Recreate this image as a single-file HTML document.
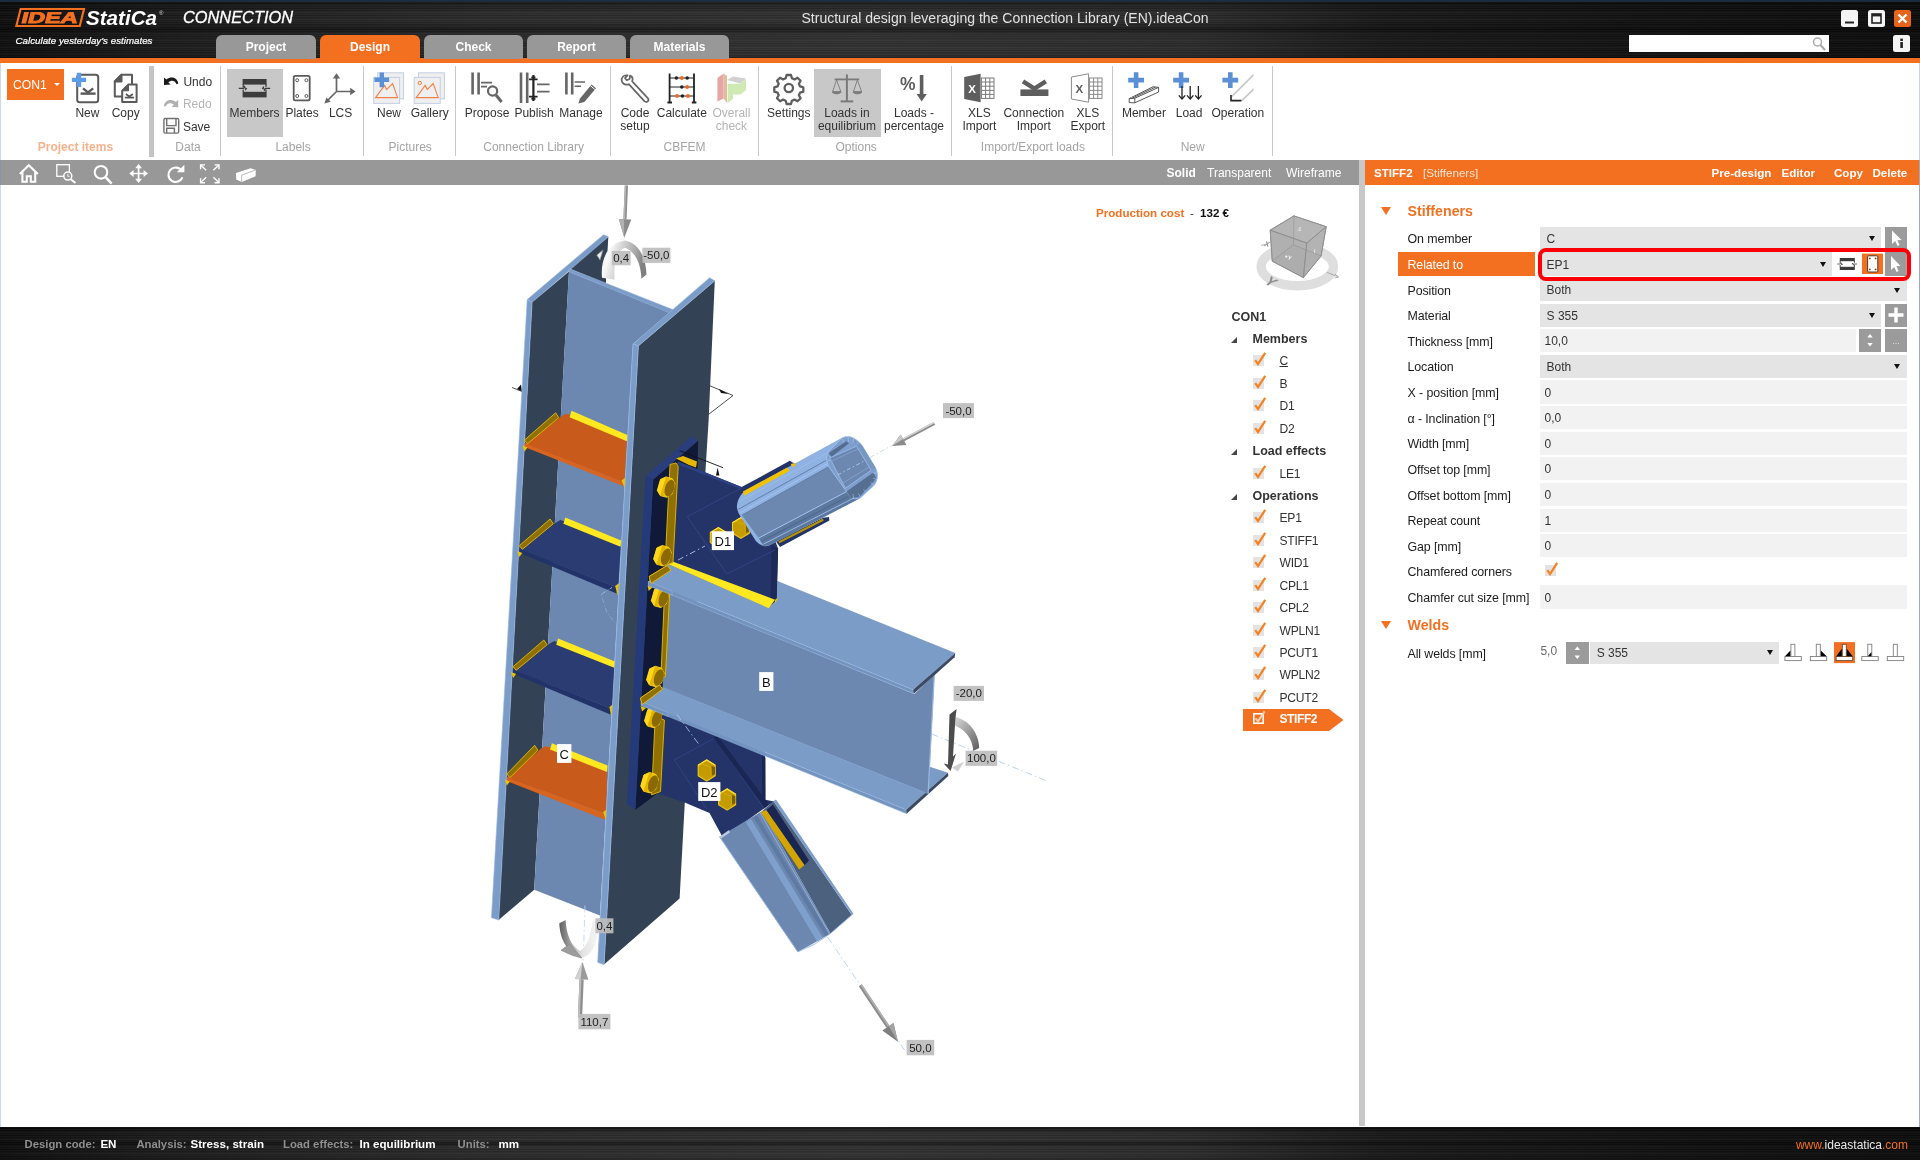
<!DOCTYPE html>
<html lang="en"><head><meta charset="utf-8"><title>IDEA StatiCa Connection</title>
<style>
*{box-sizing:border-box;margin:0;padding:0}
html,body{width:1920px;height:1160px;overflow:hidden;background:#fff}
body{font-family:"Liberation Sans",sans-serif;font-size:12px;color:#222}
#app{position:relative;width:1920px;height:1160px;overflow:hidden;background:transparent;will-change:transform}
#app div,#app span,#app b,#app svg{position:absolute}
#app svg text{font-family:"Liberation Sans",sans-serif}
.brushed{background:
 repeating-linear-gradient(180deg,rgba(255,255,255,.05) 0,rgba(0,0,0,.12) 1.5px,rgba(255,255,255,.03) 2.5px,rgba(0,0,0,.2) 4px,rgba(255,255,255,.06) 5px,rgba(0,0,0,.1) 7px),
 linear-gradient(180deg,rgba(0,0,0,.55) 0,rgba(0,0,0,.25) 10%,rgba(0,0,0,0) 22%,rgba(0,0,0,0) 38%,rgba(0,0,0,.4) 49%,rgba(0,0,0,0) 60%,rgba(0,0,0,0) 88%,rgba(0,0,0,.25) 100%),
 linear-gradient(90deg,#0e0e0e 0,#1b1b1b 8%,#2b2b2b 25%,#323232 45%,#2c2c2c 62%,#191919 72%,#111 86%,#0c0c0c 100%)}
#hdr{left:0;top:0;width:1920px;height:59px}
#oline{left:0;top:58px;width:1920px;height:5px;background:#f37021}
.tab{top:35px;height:24px;width:100px;border-radius:6px 6px 0 0;background:#989898;color:#fff;font-weight:bold;font-size:12px;text-align:center;line-height:25px}
.tab.act{background:#f37021}
#title{left:705px;top:10.3px;width:600px;text-align:center;color:#e2e2e2;font-size:14px;white-space:nowrap}
.wbtn{top:10px;width:17px;height:17px;border-radius:2.5px;background:#f4f4f4}
#search{left:1629px;top:35px;width:200px;height:17px;background:#fff}
/* ribbon */
#ribbon{left:0;top:63px;width:1920px;height:97px;background:#fff}
.rsep{top:3px;width:1px;height:90px;background:#c9c9c9}
.rl{font-size:12px;color:#333;white-space:nowrap;text-align:center;line-height:13.2px;transform:translateX(-50%)}
.rl.dis{color:#b4b4b4}
.rg{top:77px;font-size:12px;color:#a4a4a4;white-space:nowrap;transform:translateX(-50%)}
.rsel{top:6px;height:68px;background:#c8c8c8}
/* toolbar */
#tb{left:0;top:159.5px;width:1359px;height:25px;background:#989898}
.tbt{top:6.9px;color:#fff;font-size:12px;white-space:nowrap}
/* view */
#view{left:0;top:184.5px;width:1359px;height:941.5px;background:#fff;overflow:hidden}
#view > *{}
.pc{left:1096px;top:206px;white-space:nowrap;font-size:11.6px;height:14px;width:140px}
.pc .o{color:#f37021;left:0}.pc .d{left:94px;color:#333}.pc b{left:104px;color:#111}
.t{white-space:nowrap;font-size:12.5px;color:#333;line-height:16px}
.troot{left:1231.5px;font-weight:bold}
.tgrp{left:1252.5px;font-weight:bold}
.titem{left:1279.5px;font-size:12.1px;letter-spacing:-.25px}
.tu{text-decoration:underline}
.tsel{color:#fff;font-weight:bold;margin-top:-1.4px;letter-spacing:-.45px}
.tarr{left:1231px;width:0;height:0;border-left:6px solid transparent;border-bottom:6px solid #444}
.tc{left:1252px;width:16px;height:16px}
.selbg{left:1242.5px}
#split{left:1359px;top:160px;width:6px;height:966px;background:#c8c8c8}
/* panel */
#panel{left:1365px;top:160px;width:555px;height:966px;background:#fff}
.phead{left:0;top:0;width:555px;height:24.5px;background:#f37021;color:#fff;font-size:11.6px;line-height:24px;white-space:nowrap}
.phead .pn{left:9px;top:1px}.phead .pt{left:58px;top:1px;color:#fde3d2}
.phead .pa{top:1px}
.sectri{left:1381px;width:0;height:0;border-left:5.5px solid transparent;border-right:5.5px solid transparent;border-top:8px solid #f37021}
.sech{left:1407.5px;color:#f37021;font-weight:bold;font-size:14.2px;line-height:18px;white-space:nowrap}
.plab{left:1407.5px;font-size:12.4px;color:#1c1c1c;white-space:nowrap;line-height:16px;letter-spacing:-.1px}
.plabsel{left:1398px;width:136.6px;height:24px;background:#f37021}
.fld{height:23.2px;font-size:12px;color:#333;line-height:23px;white-space:nowrap;overflow:hidden}
.fld span{left:6.6px;top:1.2px}
.fld.dd{background:#e4e4e4}
.fld.tx{background:#f2f2f2}
.fld.tx span{left:4.5px}
.ddarr{width:0;height:0;border-left:3.7px solid transparent;border-right:3.7px solid transparent;border-top:5px solid #111}
.sbtn{width:22px;height:23.2px;overflow:hidden;background:#9b9b9b}
.sbtn svg{left:0;top:0}
.pcb{left:1544px;width:16px;height:16px}
.redbox{left:1538.2px;width:373px;height:32.8px;border:4.1px solid #fb0007;border-radius:8px;z-index:5}
/* status */
#status{left:0;top:1126.5px;width:1920px;height:34px}
.sl{top:11px;color:#8e8e8e;font-size:11.3px;font-weight:bold;white-space:nowrap}
.sv{top:10.6px;color:#fff;font-size:11.6px;white-space:nowrap}
.url{right:12px;top:11.5px;color:#e8e8e8;font-size:12px;white-space:nowrap}
.url i{font-style:normal;color:#f37021}

</style></head><body>
<div id="app">
<div id="hdr" class="brushed"></div>
<div id="oline"></div><div style="left:0;top:0;width:1920px;height:1.5px;background:#1d3146;opacity:.85"></div>
<svg id="logo" style="left:14px;top:5px" width="290" height="44" viewBox="0 0 290 44">
 <g transform="skewX(-14)">
  <rect x="7.6" y="4" width="63.4" height="17" fill="none" stroke="#f37021" stroke-width="2.2"/>
  <text x="11" y="18.4" font-size="15.5" font-weight="bold" fill="#f37021" stroke="#f37021" stroke-width=".9" textLength="56.5" lengthAdjust="spacingAndGlyphs">IDEA</text>
 </g>
 <text x="72" y="19.8" font-size="19.5" font-weight="bold" font-style="italic" fill="#fff" textLength="71" lengthAdjust="spacingAndGlyphs">StatiCa</text>
 <text x="145" y="9.6" font-size="6" fill="#ddd">®</text>
 <text x="169" y="18.2" font-size="16.4" font-style="italic" fill="#fff" stroke="#fff" stroke-width=".3" textLength="110" lengthAdjust="spacingAndGlyphs">CONNECTION</text>
 <text x="1.5" y="38.5" font-size="9.4" font-style="italic" fill="#fff" stroke="#fff" stroke-width=".2" textLength="137" lengthAdjust="spacingAndGlyphs">Calculate yesterday's estimates</text>
</svg>
<div class="tab" style="left:216px">Project</div>
<div class="tab act" style="left:320px">Design</div>
<div class="tab" style="left:424px;width:99px">Check</div>
<div class="tab" style="left:527px;width:99px">Report</div>
<div class="tab" style="left:630px;width:99px">Materials</div>
<div id="title">Structural design leveraging the Connection Library (EN).ideaCon</div>
<div class="wbtn" style="left:1841px"><svg width="17" height="17"><rect x="4" y="11.5" width="9" height="2" fill="#222"/></svg></div>
<div class="wbtn" style="left:1868px"><svg width="17" height="17"><rect x="4" y="4" width="9" height="9" fill="none" stroke="#222" stroke-width="1.6"/><rect x="4" y="4" width="9" height="2.4" fill="#222"/></svg></div>
<div class="wbtn" style="left:1894px;background:#e8641a"><svg width="17" height="17"><path d="M4.5 4.5 L12.5 12.5 M12.5 4.5 L4.5 12.5" stroke="#fff" stroke-width="2.4"/></svg></div>
<div id="search"><svg style="left:180px;top:0" width="20" height="17"><circle cx="8.5" cy="7" r="4" fill="none" stroke="#aaa" stroke-width="1.5"/><path d="M11.5 10 L16 15" stroke="#aaa" stroke-width="2.2"/></svg></div>
<div class="wbtn" style="left:1893px;top:35px"><svg width="17" height="17"><rect x="7.3" y="7" width="2.6" height="6" fill="#222"/><rect x="7.3" y="3.6" width="2.6" height="2.4" fill="#222"/></svg></div>

<div id="ribbon">
<div style="left:6.5px;top:6px;width:57.5px;height:30.5px;background:#f37021"></div>
<div style="left:13px;top:15.2px;color:#fff;font-size:12.2px;white-space:nowrap">CON1</div>
<div style="left:53.5px;top:20px;width:0;height:0;border-left:3px solid transparent;border-right:3px solid transparent;border-top:3.5px solid #fff"></div>
<div style="left:149px;top:2.5px;width:4.5px;height:91px;background:#c4c4c4"></div>
<div class="rsel" style="left:226.5px;width:56px"></div>
<div class="rsel" style="left:813.7px;width:67px"></div>
<div class="rsep" style="left:220px"></div><div class="rsep" style="left:363px"></div><div class="rsep" style="left:455px"></div>
<div class="rsep" style="left:610px"></div><div class="rsep" style="left:758px"></div><div class="rsep" style="left:951px"></div>
<div class="rsep" style="left:1112px"></div><div class="rsep" style="left:1272px"></div>
<div class="rl" style="left:87.4px;top:44.2px">New</div>
<div class="rl" style="left:125.7px;top:44.2px">Copy</div>
<div class="rl" style="left:197.8px;top:13px">Undo</div>
<div class="rl dis" style="left:197.3px;top:35.4px">Redo</div>
<div class="rl" style="left:196.6px;top:57.7px">Save</div>
<div class="rl" style="left:254.6px;top:44.2px">Members</div>
<div class="rl" style="left:302.1px;top:44.2px">Plates</div>
<div class="rl" style="left:340.6px;top:44.2px">LCS</div>
<div class="rl" style="left:389px;top:44.2px">New</div>
<div class="rl" style="left:429.7px;top:44.2px">Gallery</div>
<div class="rl" style="left:487px;top:44.2px">Propose</div>
<div class="rl" style="left:534.1px;top:44.2px">Publish</div>
<div class="rl" style="left:581px;top:44.2px">Manage</div>
<div class="rl" style="left:635px;top:44.2px">Code<br>setup</div>
<div class="rl" style="left:681.8px;top:44.2px">Calculate</div>
<div class="rl dis" style="left:731.4px;top:44.2px">Overall<br>check</div>
<div class="rl" style="left:788.8px;top:44.2px">Settings</div>
<div class="rl" style="left:846.9px;top:44.2px">Loads in<br>equilibrium</div>
<div class="rl" style="left:914px;top:44.2px">Loads -<br>percentage</div>
<div class="rl" style="left:979.4px;top:44.2px">XLS<br>Import</div>
<div class="rl" style="left:1033.8px;top:44.2px">Connection<br>Import</div>
<div class="rl" style="left:1087.8px;top:44.2px">XLS<br>Export</div>
<div class="rl" style="left:1143.9px;top:44.2px">Member</div>
<div class="rl" style="left:1189.1px;top:44.2px">Load</div>
<div class="rl" style="left:1237.8px;top:44.2px">Operation</div>
<div class="rg" style="left:75.4px;color:#f8b28c;font-weight:bold">Project items</div>
<div class="rg" style="left:188px">Data</div>
<div class="rg" style="left:293.1px">Labels</div>
<div class="rg" style="left:410.2px">Pictures</div>
<div class="rg" style="left:533.6px">Connection Library</div>
<div class="rg" style="left:684.6px">CBFEM</div>
<div class="rg" style="left:856.2px">Options</div>
<div class="rg" style="left:1032.9px">Import/Export loads</div>
<div class="rg" style="left:1192.7px">New</div>
<svg style="left:0;top:0" width="1300" height="97" viewBox="0 63 1300 97">
<!-- New project item -->
<g fill="none" stroke="#5a5a5a" stroke-width="2">
 <rect x="77.2" y="74.8" width="21" height="27.4" rx="2.5"/>
 <path d="M80.6 93.6 H95.6" stroke-width="2.4"/><path d="M83 88.4 L88 92.4 L93.2 88.4" stroke-width="2.4"/>
</g>
<path d="M76.8 72.8 h4.4 v4.9 h4.9 v4.4 h-4.9 v4.9 h-4.4 v-4.9 h-4.9 v-4.4 h4.9 z" fill="#5d9de8"/>
<!-- Copy -->
<g fill="#fff" stroke="#5a5a5a" stroke-width="2" stroke-linejoin="round">
 <path d="M121.5 74.8 H132 V96.5 H114.8 V81.5 Z"/><path d="M121.5 74.8 V81.5 H114.8 Z" fill="#5a5a5a"/>
 <path d="M128.5 84.5 H136.6 V102 H122.2 V90.8 Z"/><path d="M128.5 84.5 V90.8 H122.2 Z" fill="#5a5a5a" stroke-width="1"/>
 <path d="M124.8 97.6 H134" stroke-width="1.8"/><path d="M126 94 L129.4 96.8 L132.8 94" stroke-width="1.8" fill="none"/>
</g>
<!-- Undo / Redo / Save -->
<path d="M164,77.4 L164,84.9 L170.6,84.6 L168.3,82.3 C171,79.8 175,80.2 176.6,84.2 L178.2,83.8 C178,78.4 172,75.4 166.3,79.6 Z" fill="#1a1a1a"/>
<path d="M178.2,99.8 L178.2,107.3 L171.6,107 L173.9,104.7 C171.2,102.2 167.2,102.6 165.6,106.6 L164,106.2 C164.2,100.8 170.2,97.8 175.9,102 Z" fill="#b0b0b0"/>
<g fill="none" stroke="#707070" stroke-width="1.4"><rect x="163.9" y="118.5" width="14.8" height="14.6" rx="1.4"/><path d="M166.7 118.5 V125.6 H176 V118.5"/><path d="M166.7 133 V128.2 H174.4 V133"/></g>
<!-- Members -->
<g fill="#3c3c3c"><rect x="242.6" y="79" width="24" height="5.6"/><rect x="242.6" y="91.8" width="24" height="5.6"/></g>
<path d="M238.8 88.4 H243.4 L244.6 86.6 L245.6 89.6 L246.8 88 M270.2 88.4 H265.6 L264.4 90.2 L263.4 87.2 L262.2 88.8" fill="none" stroke="#3c3c3c" stroke-width="1.1"/>
<path d="M243.2 84 V87.4 M243.2 89.6 V92 M266 84 V87 M266 89.4 V92" stroke="#3c3c3c" stroke-width="1.2"/>
<!-- Plates -->
<g fill="none" stroke="#5a5a5a"><rect x="293.7" y="75.8" width="16" height="24.6" rx="1.6" stroke-width="1.8"/>
<circle cx="297.2" cy="80.2" r="1.5"/><circle cx="306.4" cy="80.2" r="1.5"/><circle cx="297.2" cy="96" r="1.5"/><circle cx="306.4" cy="96" r="1.5"/></g>
<!-- LCS -->
<g stroke="#666" stroke-width="1.7" fill="#666"><path d="M336.5 91.5 V77.5 M336.5 91.5 H351 M336.5 91.5 L327.5 100.5" fill="none"/>
<path d="M336.5 73.2 L340.2 78.6 H332.8 Z M355.6 91.5 L350.2 95.2 V87.8 Z M324.4 103.4 L326.4 97.4 L330.8 101.8 Z" stroke="none"/></g>
<!-- New picture -->
<g stroke="#c3cfe4" stroke-width="1" fill="#efefef"><rect x="377.6" y="72.8" width="26" height="26"/><rect x="373.6" y="77.4" width="26" height="26"/></g>
<path d="M375.6 97.6 L384.6 85.4 L386.6 89.6 L392.6 83.6 L397.6 97.6 Z" fill="none" stroke="#f0814a" stroke-width="1.1"/>
<path d="M379.6 72.4 h4.4 v5.2 h5.2 v4.4 h-5.2 v5.2 h-4.4 v-5.2 h-5.2 v-4.4 h5.2 z" fill="#5b8fd6"/>
<!-- Gallery -->
<g stroke="#c3cfe4" stroke-width="1" fill="#efefef"><rect x="418.4" y="72.8" width="26" height="26"/><rect x="414.2" y="77.4" width="26" height="26"/></g>
<path d="M416.2 97.6 L425.2 85.4 L427.2 89.6 L433.2 83.6 L438.2 97.6 Z" fill="none" stroke="#f0814a" stroke-width="1.1"/><circle cx="419.8" cy="83" r="1.7" fill="none" stroke="#f0814a"/>
<!-- Propose -->
<g stroke="#666" fill="none"><path d="M472.6 72.6 V94.4 M478.6 72.6 V94.4" stroke-width="2.6"/><path d="M481 82.6 H492 M481 86.6 H487" stroke-width="1.6"/><circle cx="492.6" cy="91" r="4.6" stroke-width="2.2"/><path d="M496 95 L501.6 102" stroke-width="3"/></g>
<!-- Publish -->
<g stroke="#666" fill="none"><path d="M521 72.6 V103 M527.2 72.6 V103" stroke-width="2.6"/><path d="M537 84.4 H549.6 M537 91.6 H549.6" stroke-width="1.6"/></g>
<g stroke="#222" fill="none"><path d="M533.4 75 V101 " stroke-width="2.2"/><path d="M529 79.4 H537.6 M529 96.6 H537.6" stroke-width="1.6"/><path d="M531.4 77.4 H535.4 M531.4 98.8 H535.4" stroke-width="2"/></g>
<!-- Manage -->
<g stroke="#666" fill="none"><path d="M566.4 72.6 V94.4 M572.2 72.6 V94.4" stroke-width="2.6"/><path d="M574.6 82 H585 M574.6 86.2 H581" stroke-width="1.6"/></g>
<path d="M580 98.4 L591.6 84.4 L596 88.2 L584.4 102 L578.4 103.6 Z" fill="#666"/><path d="M590.4 85.6 L594.8 89.4" stroke="#fff" stroke-width="1"/>
<!-- Code setup wrench -->
<path d="M627.6 75.4 C623.6 74.6 620.8 77.8 621.8 81.2 C622.8 84.4 626.4 85.4 628.8 84.2 L644.6 101.4 C646.6 103 649.6 100.6 648 98.4 L632.2 81.4 C633.2 78.6 632 76.4 630 75.6 L629.6 79 L626.8 80.2 L625 78.2 Z" fill="none" stroke="#666" stroke-width="1.7" stroke-linejoin="round"/>
<!-- Calculate abacus -->
<g stroke="#222" fill="none"><path d="M669.6 73.6 V102.4 M694 73.6 V102.4" stroke-width="1.8"/><path d="M667.4 102.6 H672 M691.8 102.6 H696.4" stroke-width="2"/><path d="M669.6 78 H694 M669.6 87 H694 M669.6 96 H694" stroke-width="1"/></g>
<g fill="#222"><circle cx="676.4" cy="78" r="1.8"/><circle cx="687.2" cy="78" r="1.8"/><circle cx="681.8" cy="87" r="1.8"/><circle cx="682.4" cy="96" r="1.8"/></g>
<g fill="#f06a1e"><circle cx="681.8" cy="78" r="1.9"/><circle cx="687.2" cy="87" r="1.9"/><circle cx="677" cy="96" r="1.9"/><circle cx="688" cy="96" r="1.9"/></g>
<!-- Overall check -->
<g opacity=".75"><path d="M717.4 78 L723.6 73.6 V98.6 L717.4 101.4 Z" fill="#e08888"/><path d="M723.6 73.6 L727 76 V103 L723.6 98.6 Z" fill="#d6a57c"/><path d="M727 80 L733 76.6 L746 78.6 L740.6 83.6 Z" fill="#c2c2c2"/><path d="M727.6 84 L740.6 83.6 L746 79 V90 L740.6 94.6 H733 V99 L727.6 103 Z" fill="#bfe29a"/></g>
<!-- Settings gear -->
<g transform="translate(788.8 88)"><path d="M-2.2 -13 h4.4 l.9 3.3 l2.6 1.1 l3 -1.7 l3.1 3.1 l-1.7 3 l1.1 2.6 l3.3 .9 v4.4 l-3.3 .9 l-1.1 2.6 l1.7 3 l-3.1 3.1 l-3 -1.7 l-2.6 1.1 l-.9 3.3 h-4.4 l-.9 -3.3 l-2.6 -1.1 l-3 1.7 l-3.1 -3.1 l1.7 -3 l-1.1 -2.6 l-3.3 -.9 v-4.4 l3.3 -.9 l1.1 -2.6 l-1.7 -3 l3.1 -3.1 l3 1.7 l2.6 -1.1 z" fill="none" stroke="#5e5e5e" stroke-width="2.3" stroke-linejoin="round"/><circle r="4.2" fill="none" stroke="#5e5e5e" stroke-width="2.3"/></g>
<!-- Scales -->
<g stroke="#7a7a7a" fill="none"><path d="M846.9 74.4 V101" stroke-width="2"/><path d="M834.6 79.4 H859.2" stroke-width="1.8"/><path d="M840.6 101.4 H853.2" stroke-width="2"/>
<path d="M836.6 80 L832.6 91.6 H840.8 Z M857.4 80 L853.4 91.6 H861.6 Z" stroke-width=".9"/><path d="M832.2 92 C833.6 94.4 839.6 94.4 841.2 92 Z M853 92 C854.4 94.4 860.4 94.4 862 92 Z" stroke-width="1" fill="#7a7a7a"/></g>
<!-- Loads percentage -->
<text x="900" y="90.4" font-size="17.5" font-weight="bold" fill="#5e5e5e">%</text>
<path d="M921.6 75 V95" stroke="#5e5e5e" stroke-width="3.6"/><path d="M916.6 94 H926.8 L921.7 101.6 Z" fill="#5e5e5e"/>
<!-- XLS Import -->
<path d="M964.2 77 L980.6 73.8 V102.2 L964.2 99 Z" fill="#5e5e5e"/><text x="968.2" y="92.6" font-size="11.5" font-weight="bold" fill="#fff">X</text>
<g stroke="#7a7a7a" fill="none" stroke-width="1"><rect x="981.4" y="78" width="12.6" height="20.4"/><path d="M985.6 78 V98.4 M989.8 78 V98.4 M981.4 82 H994 M981.4 86.2 H994 M981.4 90.4 H994 M981.4 94.4 H994"/></g>
<!-- Connection import -->
<path d="M1020.4 89.4 H1048.4 V96 H1020.4 Z" fill="#5e5e5e"/><path d="M1023 81.4 L1034.4 88.6 L1045.8 81.4" stroke="#5e5e5e" stroke-width="4.4" fill="none"/>
<!-- XLS Export -->
<path d="M1071.4 77 L1088.6 73.8 V102.2 L1071.4 99 Z" fill="#fff" stroke="#8a8a8a" stroke-width="1"/><text x="1075.6" y="92.6" font-size="11.5" font-weight="bold" fill="#5e5e5e">X</text>
<g stroke="#8a8a8a" fill="none" stroke-width="1"><rect x="1089.4" y="78" width="12.6" height="20.4"/><path d="M1093.6 78 V98.4 M1097.8 78 V98.4 M1089.4 82 H1102 M1089.4 86.2 H1102 M1089.4 90.4 H1102 M1089.4 94.4 H1102"/></g>
<!-- Member -->
<path d="M1133.8 72.2 h4.6 v5.6 h5.6 v4.6 h-5.6 v5.6 h-4.6 v-5.6 h-5.6 v-4.6 h5.6 z" fill="#5b8fd6"/>
<g stroke="#444" stroke-width=".9" fill="#fff"><path d="M1129.2 98.6 L1153 86.8 L1158.6 87.4 V92 L1134.8 102.8 L1129.2 102.6 Z"/><path d="M1129.2 98.6 L1134.8 98.2 L1158.6 87.4 M1134.8 98.2 V102.8 M1131.6 98.4 L1155.4 87.2"/></g>
<!-- Load -->
<path d="M1178.8 72.2 h4.6 v5.6 h5.6 v4.6 h-5.6 v5.6 h-4.6 v-5.6 h-5.6 v-4.6 h5.6 z" fill="#5b8fd6"/>
<g stroke="#222" stroke-width="1.3" fill="none"><path d="M1182 86 V99 M1190.2 86 V99 M1198.4 86 V99"/><path d="M1178.8 95.4 L1182 99 L1185.2 95.4 M1187 95.4 L1190.2 99 L1193.4 95.4 M1195.2 95.4 L1198.4 99 L1201.6 95.4"/></g>
<!-- Operation -->
<path d="M1228 72.2 h4.6 v5.6 h5.6 v4.6 h-5.6 v5.6 h-4.6 v-5.6 h-5.6 v-4.6 h5.6 z" fill="#5b8fd6"/>
<path d="M1231.6 95.4 L1253.6 73.6 V76 L1232.4 97 Z M1241 100.2 L1253.6 88 V90.4 L1242 101.6 Z" fill="#c8c8c8"/>
<path d="M1231 95 V100.6 H1241.4" stroke="#222" stroke-width="1.6" fill="none"/>
</svg>
</div>

<div id="tb">
<svg style="left:0;top:0" width="280" height="25" viewBox="0 160.3 280 25" fill="none" stroke="#fff" stroke-width="2">
 <path d="M19.8 174.4 L28.8 165.6 L37.8 174.4 M22.4 172 V182 H26.8 V176.6 H30.8 V182 H35.2 V172" stroke-width="2.1"/>
 <rect x="56.8" y="165" width="12.6" height="11.6" stroke-width="1.3"/><circle cx="67.8" cy="176.4" r="4" stroke-width="1.5" fill="#989898"/><path d="M67.8 174.2 V176.6 H69.6" stroke-width=".9"/><path d="M70.8 179.6 L75.4 183.4" stroke-width="1.9"/>
 <circle cx="101" cy="172.6" r="6.3" stroke-width="2.1"/><path d="M105.6 177.4 L111.6 184" stroke-width="2.5"/>
 <path d="M138.6 167 V180.6 M132 173.8 H145.2" stroke-width="1.7"/><path d="M135.2 168.6 L138.6 164.2 L142 168.6 Z M135.2 179 L138.6 183.4 L142 179 Z M133.6 170.4 L129.2 173.8 L133.6 177.2 Z M143.6 170.4 L148 173.8 L143.6 177.2 Z" fill="#fff" stroke="none"/>
 <path d="M181.6 171 A7.2 7.2 0 1 0 182.4 177.6" stroke-width="2.1"/><path d="M184.4 165 V172.6 H176.8 Z" fill="#fff" stroke="none"/>
 <path d="M201 165.6 L206.2 170.6 M218.6 165.6 L213.4 170.6 M218.6 182.6 L213.4 177.6 M201 182.6 L206.2 177.6" stroke-width="1.3"/><path d="M200.6 169.6 V165.2 H205 M214.6 165.2 H219 V169.6 M219 178.6 V183 H214.6 M205 183 H200.6 V178.6" stroke-width="1.4"/>
 <path d="M236 173.4 L250.6 168.6 L255.8 170.2 L255.6 176.6 L241.8 182.4 L236.2 179.8 Z" fill="#fff" stroke="none"/><path d="M241.6 175.4 L255.4 170.4 M241.6 175.4 V182" stroke="#a8a8a8" stroke-width=".8"/>
</svg>
<b class="tbt" style="left:1166.5px">Solid</b><span class="tbt" style="left:1207px">Transparent</span><span class="tbt" style="left:1286px">Wireframe</span>
</div>

<div id="view">
<svg id="model" style="left:0;top:0" width="1359" height="942" viewBox="0 184.5 1359 942">
<defs>
<linearGradient id="gsh" x1="0" y1="0" x2="1" y2="0"><stop offset="0" stop-color="#8a8a8a"/><stop offset=".5" stop-color="#d8d8d8"/><stop offset="1" stop-color="#8e8e8e"/></linearGradient>
<linearGradient id="garc" x1="0" y1="0" x2="1" y2="0.25"><stop offset="0" stop-color="#d4d4d4"/><stop offset=".22" stop-color="#fafafa"/><stop offset=".5" stop-color="#cfcfcf"/><stop offset=".8" stop-color="#a4a4a4"/><stop offset="1" stop-color="#808080"/></linearGradient>
<linearGradient id="garc2" x1="0" y1="0" x2="1" y2="1"><stop offset="0" stop-color="#e0e0e0"/><stop offset="1" stop-color="#5a5a5a"/></linearGradient>
<linearGradient id="gtube" gradientUnits="userSpaceOnUse" x1="790" y1="467.9" x2="817.7" y2="522.3"><stop offset="0" stop-color="#8db0de"/><stop offset=".12" stop-color="#86a8d6"/><stop offset=".2" stop-color="#6c88b0"/><stop offset=".72" stop-color="#6a86ae"/><stop offset=".8" stop-color="#8cb0de"/><stop offset=".9" stop-color="#7a9ac6"/><stop offset="1" stop-color="#8db0de"/></linearGradient>
<linearGradient id="garc3" x1="0" y1="0" x2="1" y2="0"><stop offset="0" stop-color="#5e5e5e"/><stop offset=".3" stop-color="#a8a8a8"/><stop offset=".6" stop-color="#e4e4e4"/><stop offset="1" stop-color="#f6f6f6"/></linearGradient>
</defs>
<polyline points="512.0,387.0 522.0,391.0" fill="none" stroke="#222" stroke-width="0.8"/>
<polyline points="708.0,384.5 733.0,395.0 706.5,415.5" fill="none" stroke="#222" stroke-width="0.8"/>
<polygon points="719.0,388.5 728.5,393.5 721.0,392.5" fill="#111"/>
<polygon points="517.0,388.5 521.0,384.0 522.0,391.0" fill="#111"/>
<polygon points="569.0,268.0 608.3,236.3 605.8,284.0" fill="#344256"/>
<polygon points="527.2,299.0 603.5,234.2 608.3,236.3 532.1,302.0" fill="#7c9cc8" stroke="#9ab8e2" stroke-width="0.6"/>
<polygon points="532.1,302.0 569.0,271.0 534.2,889.2 498.6,919.6" fill="#344256"/>
<polygon points="527.2,299.0 532.1,302.0 498.8,919.6 491.4,917.2" fill="#7c9cc8" stroke="#9ab8e2" stroke-width="0.6"/>
<polygon points="569.0,269.5 672.0,311.5 633.1,343.4 600.0,915.0 534.2,889.2" fill="#6c88b0"/>
<polygon points="569.0,268.0 673.4,309.3 670.3,312.6 569.0,271.2" fill="#7c9cc8" stroke="#9ab8e2" stroke-width="0.5"/>
<polygon points="638.3,345.5 714.8,280.3 708.6,420.0 684.8,802.0 679.6,898.0 604.0,964.0" fill="#344256"/>
<polygon points="633.1,343.4 709.6,277.2 714.8,280.3 638.3,345.5" fill="#7c9cc8" stroke="#9ab8e2" stroke-width="0.6"/>
<polygon points="633.1,343.4 638.3,345.5 604.0,964.0 597.8,961.8" fill="#7c9cc8" stroke="#9ab8e2" stroke-width="0.6"/>
<polygon points="524.5,443.0 562.0,415.5 566.0,413.3 571.0,414.5 627.0,440.0 624.5,482.0" fill="#c85a1c"/>
<polygon points="524.5,442.6 624.5,482.0 623.8,485.8 524.5,446.6" fill="#d8641f"/>
<polygon points="571.5,410.3 627.4,434.4 626.8,440.8 569.6,416.7" fill="#ffe820"/>
<polygon points="524.5,439.6 555.6,412.3 558.8,417.1 527.6,443.2" fill="#8f7000" stroke="#e6bc00" stroke-width="0.9"/>
<polygon points="522.5,445.0 527.5,447.0 524.5,451.0" fill="#e8c400"/>
<polygon points="621.5,480.0 625.5,477.0 624.8,487.8" fill="#e8c400"/>
<polygon points="519.3,548.6 556.5,521.7 560.5,519.5 564.8,521.1 620.7,545.5 618.2,587.4" fill="#2a3c72"/>
<polygon points="519.3,548.2 618.2,587.4 616.5,593.0 519.3,552.2" fill="#22336a"/>
<polygon points="565.3,516.9 621.1,539.9 620.5,546.3 563.4,523.3" fill="#ffe820"/>
<polygon points="519.3,545.2 550.1,518.5 553.3,523.3 522.4,548.8" fill="#8f7000" stroke="#e6bc00" stroke-width="0.9"/>
<polygon points="517.3,550.6 522.3,552.6 519.3,556.6" fill="#e8c400"/>
<polygon points="615.2,585.4 619.2,582.4 617.5,595.0" fill="#e8c400"/>
<polygon points="513.1,669.6 550.3,642.7 554.3,640.5 557.6,642.1 614.5,666.5 612.4,708.4" fill="#2a3c72"/>
<polygon points="513.1,669.2 612.4,708.4 610.3,714.1 513.1,673.2" fill="#22336a"/>
<polygon points="558.1,637.9 614.9,660.9 614.3,667.3 556.2,644.3" fill="#ffe820"/>
<polygon points="513.1,666.2 543.9,639.5 547.1,644.3 516.2,669.8" fill="#8f7000" stroke="#e6bc00" stroke-width="0.9"/>
<polygon points="511.1,671.6 516.1,673.6 513.1,677.6" fill="#e8c400"/>
<polygon points="609.4,706.4 613.4,703.4 611.3,716.1" fill="#e8c400"/>
<polygon points="506.9,776.9 541.0,748.0 545.0,745.8 551.4,746.9 607.2,770.7 606.2,813.4" fill="#c85a1c"/>
<polygon points="506.9,776.5 606.2,813.4 605.2,819.3 506.9,780.5" fill="#d8641f"/>
<polygon points="551.9,742.7 607.6,765.1 607.0,771.5 550.0,749.1" fill="#ffe820"/>
<polygon points="506.9,773.5 534.6,744.8 537.8,749.6 510.0,777.1" fill="#8f7000" stroke="#e6bc00" stroke-width="0.9"/>
<polygon points="504.9,778.9 509.9,780.9 506.9,784.9" fill="#e8c400"/>
<polygon points="603.2,811.4 607.2,808.4 606.2,821.3" fill="#e8c400"/>
<polygon points="633.1,343.4 638.3,345.5 604.0,964.0 597.8,961.8" fill="#7c9cc8" stroke="#9ab8e2" stroke-width="0.6"/>
<polygon points="653.2,478.9 698.2,440.1 690.0,770.0 657.9,792.4 635.2,809.4" fill="#101a38"/>
<polygon points="645.4,475.8 691.2,436.2 698.2,440.1 653.2,478.9" fill="#2a3d7c"/>
<polygon points="645.4,475.8 653.2,478.9 635.4,809.4 626.9,803.8" fill="#253a78"/>
<polygon points="660.0,700.0 765.0,745.0 765.4,799.3 774.0,801.0 730.0,832.0 722.4,836.2 709.5,812.4 684.7,802.0 658.0,793.0" fill="#243468"/>
<polyline points="674.3,759.3 714.7,737.6 764.0,808.0" fill="none" stroke="#32478c" stroke-width="0.8"/>
<polyline points="674.3,759.3 706.9,809.0" fill="none" stroke="#32478c" stroke-width="0.8"/>
<polygon points="713.4,737.0 717.6,735.2 769.0,804.0 764.6,807.4" fill="#1a2754"/>
<polygon points="762.0,756.0 765.4,757.0 765.4,799.3 762.0,795.0" fill="#1a2754"/>
<polygon points="641.3,701.1 662.7,686.9 929.8,766.2 947.9,772.2 906.2,809.3" fill="#7c9cc8"/>
<polygon points="641.3,701.1 906.2,809.3 906.6,813.3 641.3,705.0" fill="#7494c0" stroke="#9ab8e2" stroke-width="0.5"/>
<polygon points="947.9,772.2 948.3,775.4 906.6,813.3 906.2,809.3" fill="#3a4a62"/>
<polygon points="664.0,590.0 914.4,693.5 934.5,674.0 928.4,792.9 662.7,686.9" fill="#6c88b0"/>
<polyline points="934.4,672.2 928.1,793.4" fill="none" stroke="#9ab8e2" stroke-width="1.2"/>
<polyline points="662.7,686.9 927.4,793.0" fill="none" stroke="#86a4d0" stroke-width="0.7"/>
<polygon points="648.4,580.9 690.0,545.1 955.3,652.4 913.1,689.3" fill="#7c9cc8"/>
<polygon points="648.4,580.9 913.1,689.3 913.8,693.2 648.4,585.0" fill="#7494c0" stroke="#9ab8e2" stroke-width="0.5"/>
<polygon points="955.3,652.4 954.6,656.7 913.8,693.2 913.1,689.3" fill="#3a4a62"/>
<polygon points="678.0,461.0 741.6,486.6 760.0,500.0 778.1,547.9 776.6,599.5 768.8,607.0 667.9,563.5 674.0,470.0" fill="#243468"/>
<polygon points="678.0,461.0 741.6,486.6 741.0,489.0 677.0,463.4" fill="#2b4184"/>
<polygon points="771.5,545.0 778.1,547.9 776.6,599.5 770.6,604.0" fill="#1c2a58"/>
<polyline points="687.3,516.1 741.6,487.4" fill="none" stroke="#34498e" stroke-width="0.8"/>
<polyline points="687.3,516.1 726.9,573.5 775.0,549.5" fill="none" stroke="#34498e" stroke-width="0.8"/>
<polyline points="678.0,559.5 705.0,545.5" fill="none" stroke="#c8d8f0" stroke-width="0.8" stroke-dasharray="6 3 1.5 3"/>
<polygon points="667.9,563.5 672.6,561.1 775.0,599.2 768.8,607.7" fill="#ffe820"/>
<polygon points="775.0,599.2 778.4,597.0 775.0,603.0" fill="#e8c400"/>
<polygon points="649.3,575.9 667.2,565.0 671.0,569.7 650.9,582.9" fill="#8f7000" stroke="#e6bc00" stroke-width="0.9"/>
<polygon points="670.0,464.0 676.0,462.4 678.2,466.0 673.0,562.0 665.0,565.0" fill="#8f7000" stroke="#e6bc00" stroke-width="0.9"/>
<polygon points="676.0,458.0 683.0,455.5 697.0,461.0 696.0,467.0 689.0,464.5" fill="#e8b800"/>
<polygon points="664.6,592.0 669.6,594.0 665.4,676.0 660.8,678.0" fill="#8f7000" stroke="#e6bc00" stroke-width="0.9"/>
<polygon points="640.5,697.5 659.5,684.5 662.7,688.6 642.2,704.0" fill="#8f7000" stroke="#e6bc00" stroke-width="0.9"/>
<polygon points="655.2,716.0 664.4,719.6 660.5,791.0 651.6,794.4" fill="#8f7000" stroke="#e6bc00" stroke-width="0.9"/>
<polygon points="640.6,705.4 646.0,707.6 642.0,711.0" fill="#e8c400"/>
<polygon points="647.6,585.0 652.4,587.0 648.6,590.6" fill="#e8c400"/>
<polygon points="773.6,800.7 851.8,914.5 830.5,933.0 762.2,810.6" fill="#4b617e"/>
<polygon points="773.6,800.7 776.0,799.0 853.6,913.5 851.8,914.5" fill="#7e9ecb"/>
<polygon points="719.5,836.2 748.0,820.0 797.8,951.4" fill="#6c88b0"/>
<polygon points="719.5,836.2 762.2,810.6 830.5,933.0 815.0,942.0 797.8,951.4" fill="#6c88b0"/>
<polygon points="745.6,821.4 751.0,818.4 823.0,937.4 817.0,941.0" fill="#7f9fcc"/>
<polygon points="753.5,817.0 757.0,815.0 829.0,933.8 825.5,936.0" fill="#5f7aa2"/>
<polyline points="719.5,836.2 797.8,951.4" fill="none" stroke="#9ab8e2" stroke-width="1"/>
<polyline points="797.8,951.4 815.0,943.5 830.5,933.0 851.8,914.5" fill="none" stroke="#9ab8e2" stroke-width="0.9"/>
<polyline points="760.0,812.0 829.5,933.5" fill="none" stroke="#9ab8e2" stroke-width="0.8"/>
<polygon points="760.6,811.4 766.4,809.6 804.6,864.5 799.2,869.0" fill="#d4a400"/>
<polygon points="766.4,809.6 773.0,804.0 809.0,860.0 804.6,864.5" fill="#1a2650"/>
<polygon points="719.5,836.2 729.0,829.6 730.0,832.0 721.0,838.0" fill="#b8c8e0"/>
<g transform="translate(666.4 486.6) rotate(18)"><path d="M-8,-5.5 L-3.5,-9.6 L3,-9.8 L7,-6 L7.6,4.5 L3.6,9.6 L-3.2,10 L-7.6,6 Z" fill="#f0c000" stroke="#ffd820" stroke-width=".8" stroke-linejoin="round"/><path d="M-8,-5.5 L-3.5,-9.6 L-3.2,10 L-7.6,6 Z" fill="#ffd61a"/><path d="M-3.5,-9.6 L0,-9.7 L0.2,9.8 L-3.2,10 Z" fill="#e2b400"/><ellipse cx="3.4" cy="0" rx="4.6" ry="8.6" fill="#8a6a00"/></g>
<g transform="translate(662.7 555.2) rotate(18)"><path d="M-8,-5.5 L-3.5,-9.6 L3,-9.8 L7,-6 L7.6,4.5 L3.6,9.6 L-3.2,10 L-7.6,6 Z" fill="#f0c000" stroke="#ffd820" stroke-width=".8" stroke-linejoin="round"/><path d="M-8,-5.5 L-3.5,-9.6 L-3.2,10 L-7.6,6 Z" fill="#ffd61a"/><path d="M-3.5,-9.6 L0,-9.7 L0.2,9.8 L-3.2,10 Z" fill="#e2b400"/><ellipse cx="3.4" cy="0" rx="4.6" ry="8.6" fill="#8a6a00"/></g>
<g transform="translate(660.4 596.8) rotate(18)"><path d="M-8,-5.5 L-3.5,-9.6 L3,-9.8 L7,-6 L7.6,4.5 L3.6,9.6 L-3.2,10 L-7.6,6 Z" fill="#f0c000" stroke="#ffd820" stroke-width=".8" stroke-linejoin="round"/><path d="M-8,-5.5 L-3.5,-9.6 L-3.2,10 L-7.6,6 Z" fill="#ffd61a"/><path d="M-3.5,-9.6 L0,-9.7 L0.2,9.8 L-3.2,10 Z" fill="#e2b400"/><ellipse cx="3.4" cy="0" rx="4.6" ry="8.6" fill="#8a6a00"/></g>
<g transform="translate(655.6 676.0) rotate(18)"><path d="M-8,-5.5 L-3.5,-9.6 L3,-9.8 L7,-6 L7.6,4.5 L3.6,9.6 L-3.2,10 L-7.6,6 Z" fill="#f0c000" stroke="#ffd820" stroke-width=".8" stroke-linejoin="round"/><path d="M-8,-5.5 L-3.5,-9.6 L-3.2,10 L-7.6,6 Z" fill="#ffd61a"/><path d="M-3.5,-9.6 L0,-9.7 L0.2,9.8 L-3.2,10 Z" fill="#e2b400"/><ellipse cx="3.4" cy="0" rx="4.6" ry="8.6" fill="#8a6a00"/></g>
<g transform="translate(653.6 717.0) rotate(18)"><path d="M-8,-5.5 L-3.5,-9.6 L3,-9.8 L7,-6 L7.6,4.5 L3.6,9.6 L-3.2,10 L-7.6,6 Z" fill="#f0c000" stroke="#ffd820" stroke-width=".8" stroke-linejoin="round"/><path d="M-8,-5.5 L-3.5,-9.6 L-3.2,10 L-7.6,6 Z" fill="#ffd61a"/><path d="M-3.5,-9.6 L0,-9.7 L0.2,9.8 L-3.2,10 Z" fill="#e2b400"/><ellipse cx="3.4" cy="0" rx="4.6" ry="8.6" fill="#8a6a00"/></g>
<g transform="translate(649.8 782.2) rotate(18)"><path d="M-8,-5.5 L-3.5,-9.6 L3,-9.8 L7,-6 L7.6,4.5 L3.6,9.6 L-3.2,10 L-7.6,6 Z" fill="#f0c000" stroke="#ffd820" stroke-width=".8" stroke-linejoin="round"/><path d="M-8,-5.5 L-3.5,-9.6 L-3.2,10 L-7.6,6 Z" fill="#ffd61a"/><path d="M-3.5,-9.6 L0,-9.7 L0.2,9.8 L-3.2,10 Z" fill="#e2b400"/><ellipse cx="3.4" cy="0" rx="4.6" ry="8.6" fill="#8a6a00"/></g>
<polygon points="726.5,542.1 718.4,547.1 710.3,542.1 710.3,532.1 718.4,527.1 726.5,532.1" fill="#c49c00" stroke="#f4cc10" stroke-width="1.1" stroke-linejoin="round"/>
<polyline points="710.3,532.1 718.4,527.1 726.5,532.1" fill="none" stroke="#ffe030" stroke-width="1.2"/>
<polygon points="722.9,532.9 726.2,534.1 726.2,540.7 722.9,542.1" fill="#7a5e00"/>
<polyline points="712.9,530.3 722.4,534.1 722.6,542.3" fill="none" stroke="#dcb000" stroke-width="0.8"/>
<polygon points="749.3,532.7 740.9,537.9 732.5,532.7 732.5,522.3 740.9,517.1 749.3,522.3" fill="#c49c00" stroke="#f4cc10" stroke-width="1.1" stroke-linejoin="round"/>
<polyline points="732.5,522.3 740.9,517.1 749.3,522.3" fill="none" stroke="#ffe030" stroke-width="1.2"/>
<polygon points="745.6,523.1 749.0,524.4 749.0,531.2 745.6,532.7" fill="#7a5e00"/>
<polyline points="735.2,520.4 745.1,524.4 745.3,532.9" fill="none" stroke="#dcb000" stroke-width="0.8"/>
<polygon points="715.2,775.3 706.7,780.6 698.2,775.3 698.2,764.7 706.7,759.4 715.2,764.7" fill="#c49c00" stroke="#f4cc10" stroke-width="1.1" stroke-linejoin="round"/>
<polyline points="698.2,764.7 706.7,759.4 715.2,764.7" fill="none" stroke="#ffe030" stroke-width="1.2"/>
<polygon points="711.5,765.5 715.0,766.8 715.0,773.8 711.5,775.3" fill="#7a5e00"/>
<polyline points="700.9,762.8 710.9,766.8 711.2,775.5" fill="none" stroke="#dcb000" stroke-width="0.8"/>
<polygon points="735.6,804.3 727.1,809.6 718.6,804.3 718.6,793.7 727.1,788.4 735.6,793.7" fill="#c49c00" stroke="#f4cc10" stroke-width="1.1" stroke-linejoin="round"/>
<polyline points="718.6,793.7 727.1,788.4 735.6,793.7" fill="none" stroke="#ffe030" stroke-width="1.2"/>
<polygon points="731.9,794.5 735.4,795.8 735.4,802.8 731.9,804.3" fill="#7a5e00"/>
<polyline points="721.3,791.8 731.3,795.8 731.6,804.5" fill="none" stroke="#dcb000" stroke-width="0.8"/>
<polygon points="648.4,580.9 666.4,565.6 690.0,575.0 672.0,590.6" fill="#7c9cc8"/>
<polygon points="648.4,580.9 672.0,590.6 672.0,594.6 648.4,585.0" fill="#7494c0" stroke="#9ab8e2" stroke-width="0.5"/>
<polygon points="649.3,575.9 667.2,565.0 671.0,569.7 650.9,582.9" fill="#8f7000" stroke="#e6bc00" stroke-width="0.9"/>
<polygon points="641.3,701.1 662.7,686.9 690.0,698.0 668.0,712.0" fill="#7c9cc8"/>
<polygon points="641.3,701.1 668.0,712.0 668.0,716.0 641.3,705.0" fill="#7494c0" stroke="#9ab8e2" stroke-width="0.5"/>
<polygon points="640.5,697.5 659.5,684.5 662.7,688.6 642.2,704.0" fill="#8f7000" stroke="#e6bc00" stroke-width="0.9"/>
<polygon points="741.6,486.6 789.8,460.3 795.2,463.4 796.0,468.0 746.0,494.0" fill="#22336a"/>
<polygon points="776.0,541.0 823.0,517.2 829.0,516.6 829.4,520.0 780.0,546.5" fill="#22336a"/>
<polygon points="778.2,541.0 823.0,518.0 823.6,520.2 779.4,542.8" fill="#b89400"/>
<path d="M745.7,490 L842,437.3 C846,435.6 850,435.8 853.2,437.3 C857,439.4 860,442 862.2,445.2 L875.7,467.6 C877.4,471 877.8,474.4 877.3,477.7 C876.6,481 875.2,483.6 873.4,485.5 L860,497.8 L769.2,544.9 C767,545.8 765.2,545.8 763.6,545.4 C760.4,544.2 757.8,542.6 755.8,540.4 L739,513.5 C737.6,510.8 737,508.2 736.9,505.7 C737.4,499 741,493 745.7,490 Z" fill="#8fb2e2"/>
<polygon points="742.9,491.1 787.1,467.0 789.6,470.2 744.2,495.2" fill="#f2c200"/>
<polygon points="790.6,463.6 794.6,462.6 795.4,465.2 792.0,466.4" fill="#f2c200"/>
<polygon points="758.6,537.6 846.5,491.1 860.0,497.8 769.2,544.9 763.6,545.4" fill="#5d789e"/>
<polygon points="741.8,514.6 828.6,465.9 846.5,491.1 758.6,537.6" fill="#6c88b0"/>
<polyline points="738.4,508.8 826.6,459.6" fill="none" stroke="#4f6a8e" stroke-width="0.7"/>
<polyline points="740.2,512.2 827.6,463.0" fill="none" stroke="#a8c8f4" stroke-width="0.8"/>
<polyline points="741.8,514.8 828.6,466.2" fill="none" stroke="#5a7498" stroke-width="0.6"/>
<polyline points="739.4,501.0 836.0,447.6" fill="none" stroke="#a4c2ee" stroke-width="0.6"/>
<polyline points="758.6,537.6 846.5,491.1" fill="none" stroke="#a8c8f4" stroke-width="0.9"/>
<polyline points="761.0,541.0 851.6,494.2" fill="none" stroke="#48607f" stroke-width="0.7"/>
<polyline points="763.4,543.6 856.0,496.4" fill="none" stroke="#a8c8f4" stroke-width="0.8"/>
<path d="M826.6,459.6 C826.4,455 827.4,452 829.6,450 L842,437.3 C846,435.6 850,435.8 853.2,437.3 C857,439.4 860,442 862.2,445.2 L875.7,467.6 C877.4,471 877.8,474.4 877.3,477.7 C876.6,481 875.2,483.6 873.4,485.5 L860,497.8 C857,499 853,498.6 850.6,496.6 L846.5,491.1 L828.6,465.9 Z" fill="#7e9fce" stroke="#a8c8f4" stroke-width=".7"/>
<polygon points="828.8,452.4 846.4,440.8 848.8,443.0 831.4,456.6" fill="#546d8e"/>
<polygon points="846.5,491.1 873.4,472.0 876.4,478.0 859.4,496.6 851.0,497.4" fill="#566f91"/>
<polygon points="862.2,445.2 875.7,467.6 871.2,469.8 856.6,445.7 853.2,438.4" fill="#7796c2"/>
<polygon points="829.7,457.5 856.6,445.7 871.2,469.8 845.4,487.7" fill="#6c88b0" stroke="#a4c4f0" stroke-width="0.7"/>
<polyline points="831.2,461.0 859.6,447.6" fill="none" stroke="#8caede" stroke-width="0.6"/>
<polyline points="842.0,483.0 869.4,466.4" fill="none" stroke="#8caede" stroke-width="0.6"/>
<polyline points="842.0,437.6 843.6,442.0" fill="none" stroke="#a8c8f4" stroke-width="0.6"/>
<polyline points="848.0,436.4 848.6,441.0" fill="none" stroke="#a8c8f4" stroke-width="0.6"/>
<polyline points="853.6,437.6 853.0,442.0" fill="none" stroke="#a8c8f4" stroke-width="0.6"/>
<polyline points="858.4,441.0 856.6,444.6" fill="none" stroke="#a8c8f4" stroke-width="0.6"/>
<polyline points="874.0,484.6 870.6,482.0" fill="none" stroke="#a8c8f4" stroke-width="0.6"/>
<polyline points="876.8,479.0 873.0,477.6" fill="none" stroke="#a8c8f4" stroke-width="0.6"/>
<polyline points="876.8,472.6 873.0,472.4" fill="none" stroke="#a8c8f4" stroke-width="0.6"/>
<polyline points="866.0,492.4 863.6,489.0" fill="none" stroke="#a8c8f4" stroke-width="0.6"/>
<polyline points="860.6,497.0 858.4,493.0" fill="none" stroke="#a8c8f4" stroke-width="0.6"/>
<polyline points="853.6,498.0 853.0,493.6" fill="none" stroke="#a8c8f4" stroke-width="0.6"/>
<polyline points="828.0,455.0 831.0,456.6" fill="none" stroke="#a8c8f4" stroke-width="0.6"/>
<polyline points="827.0,459.6 830.4,460.0" fill="none" stroke="#a8c8f4" stroke-width="0.6"/>
<polyline points="837.6,474.4 866.0,459.6" fill="none" stroke="#c4d8f4" stroke-width="0.7" stroke-dasharray="4 2.5 1.5 2.5"/>
<polyline points="870.0,457.0 892.0,445.0" fill="none" stroke="#b8d0f0" stroke-width="0.8" stroke-dasharray="5 2.5 1.5 2.5"/>
<polyline points="931.6,733.4 1047.9,780.9" fill="none" stroke="#a8c8f0" stroke-width="0.8" stroke-dasharray="7 3 1.5 3"/>
<polyline points="827.5,936.5 904.5,1049.5" fill="none" stroke="#a8c8f0" stroke-width="0.8" stroke-dasharray="7 3 1.5 3"/>
<polyline points="585.0,905.0 583.0,965.0" fill="none" stroke="#b8d4f4" stroke-width="0.8" stroke-dasharray="7 3 1.5 3"/>
<polyline points="677.0,714.0 699.0,744.0" fill="none" stroke="#b8c8e8" stroke-width="0.8" stroke-dasharray="7 3 1.5 3"/>
<polyline points="601.0,594.0 612.0,587.0 601.0,594.0 607.0,612.0 615.0,622.0" fill="none" stroke="#9ab8e0" stroke-width="0.6" stroke-dasharray="5 2 1 2"/>
<polyline points="679.6,450.2 723.0,467.2" fill="none" stroke="#111" stroke-width="0.9"/>
<polygon points="717.6,467.0 716.0,475.0 719.4,475.0" fill="#111"/>
<polygon points="624.8,184.9 623.4,218.7 626.6,218.8 628.0,185.1" fill="#909090"/>
<polygon points="624.8,184.9 623.4,218.7 624.9,218.7 626.2,185.0" fill="#b4b4b4"/>
<polygon points="618.8,218.5 624.3,237.3 631.3,219.0" fill="#8a8a8a"/>
<polygon points="618.8,218.5 624.3,237.3 624.0,218.7" fill="#b0b0b0"/>
<polygon points="933.6,421.4 902.8,437.9 904.3,440.7 935.2,424.2" fill="#8e8e8e"/>
<polygon points="933.6,421.4 902.8,437.9 903.5,439.1 934.3,422.7" fill="#d8d8d8"/>
<polygon points="900.7,434.0 892.1,445.4 906.4,444.6" fill="#8a8a8a"/>
<polygon points="900.7,434.0 892.1,445.4 903.1,438.4" fill="#c8c8c8"/>
<polygon points="577.9,1016.9 579.5,978.8 583.7,979.0 582.1,1017.1" fill="#8e8e8e"/>
<polygon points="577.9,1016.9 579.5,978.8 581.4,978.9 579.8,1017.0" fill="#bcbcbc"/>
<polygon points="574.9,978.6 582.4,961.4 588.4,979.2" fill="#9a9a9a"/>
<polygon points="574.9,978.6 582.4,961.4 580.6,978.8" fill="#d0d0d0"/>
<polygon points="861.8,983.8 889.4,1025.3 886.4,1027.3 858.8,985.8" fill="#8c8c8c"/>
<polygon points="861.8,983.8 889.4,1025.3 888.1,1026.2 860.4,984.7" fill="#b0b0b0"/>
<polygon points="893.5,1022.6 897.9,1041.3 882.3,1030.1" fill="#7e7e7e"/>
<polygon points="893.5,1022.6 897.9,1041.3 888.8,1025.7" fill="#a4a4a4"/>
<path d="M602,277.2 C600,256 610,242 624.8,240 C638,242 646,256 646.5,274.1 L641.4,278.3 C641,262 634,250 624.8,247.2 C617,250 613.6,262 614.5,279.3 Z" fill="url(#garc)"/>
<path d="M596.8,254.6 L603,249.4 L600,259.6 Z" fill="#f0f0f0" stroke="#8a8a8a" stroke-width=".7"/>
<path d="M559.3,922.8 C560,940 568,953 582,957.2 C592,955 598,944 598.6,920 L592.4,920 C591,938 586,947 580,950.4 C572,946 566.4,936 565.6,919.6 Z" fill="url(#garc3)"/>
<path d="M561,949.8 L569.6,943.4 L582,957.6 L572.4,955 Z" fill="#9c9c9c" stroke="#7a7a7a" stroke-width=".5"/>
<path d="M955,716.6 C968,719 979,732 979.2,747.6 L973.2,750.6 C973,738 964,727.4 951.6,724 Z" fill="url(#garc2)"/>
<path d="M949.5,714 L956.6,708.5 L955.4,718 L953,756 L956,753 L950.6,770.5 L943.6,763 L948,764 Z" fill="#4c4c4c"/>
<path d="M952,767 L964,761 L958,771 Z" fill="#d0d0d0"/>
<rect x="642.4" y="247.2" width="28" height="15.2" fill="#bdbdbd" fill-opacity=".92"/><text x="656.4" y="258.79999999999995" font-size="11.5" fill="#1e1e1e" text-anchor="middle">-50,0</text>
<rect x="611.8" y="250.4" width="18.8" height="14.4" fill="#bdbdbd" fill-opacity=".92"/><text x="621.1999999999999" y="261.2" font-size="11.5" fill="#1e1e1e" text-anchor="middle">0,4</text>
<rect x="943" y="402.6" width="31" height="15" fill="#bdbdbd" fill-opacity=".92"/><text x="958.5" y="414.0" font-size="11.5" fill="#1e1e1e" text-anchor="middle">-50,0</text>
<rect x="953.6" y="685.4" width="30.4" height="15" fill="#bdbdbd" fill-opacity=".92"/><text x="968.8000000000001" y="696.8" font-size="11.5" fill="#1e1e1e" text-anchor="middle">-20,0</text>
<rect x="965.6" y="750.2" width="31.6" height="15.2" fill="#bdbdbd" fill-opacity=".92"/><text x="981.4" y="761.8000000000001" font-size="11.5" fill="#1e1e1e" text-anchor="middle">100,0</text>
<rect x="595.4" y="917.8" width="18" height="15" fill="#bdbdbd" fill-opacity=".92"/><text x="604.4" y="929.1999999999999" font-size="11.5" fill="#1e1e1e" text-anchor="middle">0,4</text>
<rect x="578.4" y="1013.4" width="32" height="15.4" fill="#bdbdbd" fill-opacity=".92"/><text x="594.4" y="1025.2" font-size="11.5" fill="#1e1e1e" text-anchor="middle">110,7</text>
<rect x="906.6" y="1039.4" width="27.6" height="15.4" fill="#bdbdbd" fill-opacity=".92"/><text x="920.4" y="1051.2000000000003" font-size="11.5" fill="#1e1e1e" text-anchor="middle">50,0</text>
<rect x="711.8" y="530.8" width="22.2" height="18.8" fill="#fff"/><text x="722.9" y="545.3999999999999" font-size="13" fill="#111" text-anchor="middle">D1</text>
<rect x="759.2" y="671.6" width="14.2" height="18.8" fill="#fff"/><text x="766.3000000000001" y="686.1999999999999" font-size="13" fill="#111" text-anchor="middle">B</text>
<rect x="557" y="743.6" width="14.4" height="18.8" fill="#fff"/><text x="564.2" y="758.1999999999999" font-size="13" fill="#111" text-anchor="middle">C</text>
<rect x="698.2" y="781.6" width="22.2" height="18.8" fill="#fff"/><text x="709.3000000000001" y="796.1999999999999" font-size="13" fill="#111" text-anchor="middle">D2</text>
</svg>
</div>
<div class="pc"><b class="o">Production cost</b><span class="d">-</span><b>132 €</b></div>
<svg style="left:1240px;top:200px" width="118" height="100" viewBox="1240 200 118 100">
<ellipse cx="1297.3" cy="266.6" rx="36.2" ry="19.2" fill="none" stroke="#dedede" stroke-width="9.4"/>
<g stroke="#8e8e8e" stroke-width=".9" stroke-linejoin="round">
<polygon points="1293.9,215.9 1326.2,226.7 1321,256 1293.4,244.8" fill="#b4b4b4"/>
<polygon points="1293.9,215.9 1270.2,230.2 1272.3,261.2 1293.4,244.8" fill="#b2b2b2"/>
<polygon points="1293.4,244.8 1321,256 1303.4,277.6 1272.3,261.2" fill="#acacac"/>
<polygon points="1293.9,215.9 1326.2,226.7 1306.8,243.1 1270.2,230.2" fill="#b8b8b8" fill-opacity=".5"/>
<polygon points="1270.2,230.2 1306.8,243.1 1303.4,277.6 1272.3,261.2" fill="#aeaeae" fill-opacity=".5"/>
<polygon points="1306.8,243.1 1326.2,226.7 1321,256 1303.4,277.6" fill="#b2b2b2" fill-opacity=".5"/>
</g>
<text x="1285" y="259" font-size="5.5" font-weight="bold" fill="#fff" transform="rotate(20 1288 256)">+Y</text>
<text x="1297" y="231" font-size="4.5" font-weight="bold" fill="#f4f4f4" transform="rotate(-20 1299 229)">-Z</text>
<text x="1314" y="253" font-size="5" font-weight="bold" fill="#f4f4f4">i</text>
<g transform="translate(1272 282) rotate(30) skewX(-18)"><text x="-5.5" y="5" font-size="14" font-weight="bold" fill="#8c8c8c">Y</text></g>
<g transform="translate(1267.4 243.6) rotate(8) skewX(-18)"><text x="-2.6" y="2.8" font-size="7.5" font-weight="bold" fill="#8c8c8c">X</text></g>
<path d="M1261 245.4 L1268 243.6" stroke="#aaa" stroke-width=".8"/>
<path d="M1327 272.4 L1337.6 276.6 M1335 274 L1338.6 277 L1334.6 278" stroke="#9a9a9a" stroke-width=".8" fill="none"/>
</svg>

<div class="t troot" style="top:308.6px">CON1</div>
<div class="tarr" style="top:337.0px"></div><div class="t tgrp" style="top:331.0px">Members</div>
<div class="tc" style="top:351.4px"><svg class="chk" width="16" height="16" viewBox="0 0 16 16"><rect x="1" y="4" width="11" height="11" fill="#e3e3e3"/><path d="M3.2 9.2 L6 13 L13.2 1.8" fill="none" stroke="#f7811e" stroke-width="2.2"/></svg></div><div class="t titem tu" style="top:353.4px">C</div>
<div class="tc" style="top:373.9px"><svg class="chk" width="16" height="16" viewBox="0 0 16 16"><rect x="1" y="4" width="11" height="11" fill="#e3e3e3"/><path d="M3.2 9.2 L6 13 L13.2 1.8" fill="none" stroke="#f7811e" stroke-width="2.2"/></svg></div><div class="t titem" style="top:375.9px">B</div>
<div class="tc" style="top:396.3px"><svg class="chk" width="16" height="16" viewBox="0 0 16 16"><rect x="1" y="4" width="11" height="11" fill="#e3e3e3"/><path d="M3.2 9.2 L6 13 L13.2 1.8" fill="none" stroke="#f7811e" stroke-width="2.2"/></svg></div><div class="t titem" style="top:398.3px">D1</div>
<div class="tc" style="top:418.7px"><svg class="chk" width="16" height="16" viewBox="0 0 16 16"><rect x="1" y="4" width="11" height="11" fill="#e3e3e3"/><path d="M3.2 9.2 L6 13 L13.2 1.8" fill="none" stroke="#f7811e" stroke-width="2.2"/></svg></div><div class="t titem" style="top:420.7px">D2</div>
<div class="tarr" style="top:449.1px"></div><div class="t tgrp" style="top:443.1px">Load effects</div>
<div class="tc" style="top:463.5px"><svg class="chk" width="16" height="16" viewBox="0 0 16 16"><rect x="1" y="4" width="11" height="11" fill="#e3e3e3"/><path d="M3.2 9.2 L6 13 L13.2 1.8" fill="none" stroke="#f7811e" stroke-width="2.2"/></svg></div><div class="t titem" style="top:465.5px">LE1</div>
<div class="tarr" style="top:494.0px"></div><div class="t tgrp" style="top:488.0px">Operations</div>
<div class="tc" style="top:508.4px"><svg class="chk" width="16" height="16" viewBox="0 0 16 16"><rect x="1" y="4" width="11" height="11" fill="#e3e3e3"/><path d="M3.2 9.2 L6 13 L13.2 1.8" fill="none" stroke="#f7811e" stroke-width="2.2"/></svg></div><div class="t titem" style="top:510.4px">EP1</div>
<div class="tc" style="top:530.8px"><svg class="chk" width="16" height="16" viewBox="0 0 16 16"><rect x="1" y="4" width="11" height="11" fill="#e3e3e3"/><path d="M3.2 9.2 L6 13 L13.2 1.8" fill="none" stroke="#f7811e" stroke-width="2.2"/></svg></div><div class="t titem" style="top:532.8px">STIFF1</div>
<div class="tc" style="top:553.2px"><svg class="chk" width="16" height="16" viewBox="0 0 16 16"><rect x="1" y="4" width="11" height="11" fill="#e3e3e3"/><path d="M3.2 9.2 L6 13 L13.2 1.8" fill="none" stroke="#f7811e" stroke-width="2.2"/></svg></div><div class="t titem" style="top:555.2px">WID1</div>
<div class="tc" style="top:575.6px"><svg class="chk" width="16" height="16" viewBox="0 0 16 16"><rect x="1" y="4" width="11" height="11" fill="#e3e3e3"/><path d="M3.2 9.2 L6 13 L13.2 1.8" fill="none" stroke="#f7811e" stroke-width="2.2"/></svg></div><div class="t titem" style="top:577.6px">CPL1</div>
<div class="tc" style="top:598.1px"><svg class="chk" width="16" height="16" viewBox="0 0 16 16"><rect x="1" y="4" width="11" height="11" fill="#e3e3e3"/><path d="M3.2 9.2 L6 13 L13.2 1.8" fill="none" stroke="#f7811e" stroke-width="2.2"/></svg></div><div class="t titem" style="top:600.1px">CPL2</div>
<div class="tc" style="top:620.5px"><svg class="chk" width="16" height="16" viewBox="0 0 16 16"><rect x="1" y="4" width="11" height="11" fill="#e3e3e3"/><path d="M3.2 9.2 L6 13 L13.2 1.8" fill="none" stroke="#f7811e" stroke-width="2.2"/></svg></div><div class="t titem" style="top:622.5px">WPLN1</div>
<div class="tc" style="top:642.9px"><svg class="chk" width="16" height="16" viewBox="0 0 16 16"><rect x="1" y="4" width="11" height="11" fill="#e3e3e3"/><path d="M3.2 9.2 L6 13 L13.2 1.8" fill="none" stroke="#f7811e" stroke-width="2.2"/></svg></div><div class="t titem" style="top:644.9px">PCUT1</div>
<div class="tc" style="top:665.3px"><svg class="chk" width="16" height="16" viewBox="0 0 16 16"><rect x="1" y="4" width="11" height="11" fill="#e3e3e3"/><path d="M3.2 9.2 L6 13 L13.2 1.8" fill="none" stroke="#f7811e" stroke-width="2.2"/></svg></div><div class="t titem" style="top:667.3px">WPLN2</div>
<div class="tc" style="top:687.7px"><svg class="chk" width="16" height="16" viewBox="0 0 16 16"><rect x="1" y="4" width="11" height="11" fill="#e3e3e3"/><path d="M3.2 9.2 L6 13 L13.2 1.8" fill="none" stroke="#f7811e" stroke-width="2.2"/></svg></div><div class="t titem" style="top:689.7px">PCUT2</div>
<svg class="selbg" style="top:708.6px" width="101" height="22" viewBox="0 0 101 22"><path d="M0 0 H86 L100.5 11 L86 22 H0 Z" fill="#f37021"/></svg>
<div class="tc" style="top:709.0px"><svg class="chk" width="16" height="16" viewBox="0 0 16 16"><rect x="1.8" y="4.8" width="9.4" height="9.4" fill="none" stroke="#fff" stroke-width="1.6"/><path d="M3.6 9.4 L6 12.4 L12.6 2.4" fill="none" stroke="#fbd2b4" stroke-width="2"/></svg></div><div class="t titem tsel" style="top:712.2px">STIFF2</div>
<div id="split"></div>
<div id="panel">
<div class="phead"><b class="pn">STIFF2</b><span class="pt">[Stiffeners]</span>
<b class="pa" style="left:346.5px">Pre-design</b><b class="pa" style="left:416.5px">Editor</b><b class="pa" style="left:469px">Copy</b><b class="pa" style="left:507.5px">Delete</b></div>
</div>
<div class="sectri" style="top:207px"></div><div class="sech" style="top:201.5px">Stiffeners</div>
<div class="plab" style="top:231.2px">On member</div>
<div class="fld dd" style="top:226.6px;left:1540px;width:341px"><span>C</span></div>
<div class="ddarr" style="top:236.2px;left:1868.5px"></div>
<div class="sbtn" style="top:226.6px;left:1884.5px"><svg width="22" height="22" viewBox="0 0 22 22"><rect width="22" height="22" fill="#9b9b9b"/><path d="M7 3.5 L7 17 L10.2 14 L12.6 19 L14.6 18 L12.3 13.2 L16.5 13 Z" fill="#fff"/></svg></div>
<div class="plabsel" style="top:251.7px"></div>
<div class="plab" style="top:256.8px;color:#fff">Related to</div>
<div class="fld dd" style="top:252.4px;left:1540px;width:292px;height:24px"><span>EP1</span></div>
<div class="ddarr" style="top:261.8px;left:1820px"></div>
<svg style="left:1832px;top:252.4px" width="76" height="24" viewBox="1832 252.4 76 24">
<rect x="1832" y="252.4" width="30" height="24" fill="#fff"/>
<g fill="#3c3c3c"><rect x="1839.8" y="258.4" width="15" height="3.2"/><rect x="1839.8" y="267.2" width="15" height="3.2"/></g>
<path d="M1837.4 264.4 H1840.4 L1841.2 263.2 L1841.8 265.4 L1842.6 264.2 M1857 264.4 H1854.2 L1853.4 265.6 L1852.8 263.4 L1852 264.6" fill="none" stroke="#3c3c3c" stroke-width=".8"/>
<path d="M1840.2 261 V263.4 M1840.2 265.4 V267.6 M1854.4 261 V263.2 M1854.4 265.2 V267.6" stroke="#3c3c3c" stroke-width=".9"/>
<rect x="1862" y="254" width="21" height="20.4" fill="#f37021"/>
<rect x="1867.6" y="256.2" width="10.2" height="16.2" rx="1" fill="#fff" stroke="#4a3a30" stroke-width="1"/>
<g fill="#8a3c10"><circle cx="1869.8" cy="258.8" r=".9"/><circle cx="1875.6" cy="258.8" r=".9"/><circle cx="1869.8" cy="269.8" r=".9"/><circle cx="1875.6" cy="269.8" r=".9"/></g>
<rect x="1884.9" y="252.4" width="22" height="24" fill="#9b9b9b"/>
<path d="M1891 256.4 L1891 270.4 L1894.2 267.4 L1896.6 272.4 L1898.6 271.4 L1896.3 266.6 L1900.5 266.4 Z" fill="#fff"/>
</svg>

<div class="redbox" style="top:248px"></div>
<div class="plab" style="top:282.5px">Position</div>
<div class="fld dd" style="top:277.9px;left:1540px;width:367px"><span>Both</span></div>
<div class="ddarr" style="top:287.5px;left:1894px"></div>
<div class="plab" style="top:308.1px">Material</div>
<div class="fld dd" style="top:303.5px;left:1540px;width:341px"><span>S 355</span></div>
<div class="ddarr" style="top:313.1px;left:1868.5px"></div>
<div class="sbtn" style="top:303.5px;left:1884.5px"><svg width="22" height="22" viewBox="0 0 22 22"><rect width="22" height="22" fill="#9b9b9b"/><path d="M11 3.5 V18.5 M3.5 11 H18.5" stroke="#fff" stroke-width="3.4"/></svg></div>
<div class="plab" style="top:333.7px">Thickness [mm]</div>
<div class="fld tx" style="top:329.1px;left:1540px;width:316px"><span>10,0</span></div>
<div class="sbtn" style="top:329.1px;left:1859px"><svg width="22" height="22" viewBox="0 0 22 22"><rect width="22" height="22" fill="#9b9b9b"/><path d="M8.3 8.5 L11 5 L13.7 8.5 Z M8.3 14 L11 17.5 L13.7 14 Z" fill="#fff"/></svg></div>
<div class="sbtn" style="top:329.1px;left:1884.5px"><svg width="22" height="22" viewBox="0 0 22 22"><rect width="22" height="22" fill="#9b9b9b"/><text x="11" y="15" font-size="9" fill="#e6e6e6" text-anchor="middle" font-family="Liberation Sans, sans-serif">...</text></svg></div>
<div class="plab" style="top:359.4px">Location</div>
<div class="fld dd" style="top:354.8px;left:1540px;width:367px"><span>Both</span></div>
<div class="ddarr" style="top:364.4px;left:1894px"></div>
<div class="plab" style="top:385.0px">X - position [mm]</div>
<div class="fld tx" style="top:380.4px;left:1540px;width:367px"><span>0</span></div>
<div class="plab" style="top:410.6px">α - Inclination [°]</div>
<div class="fld tx" style="top:406.0px;left:1540px;width:367px"><span>0,0</span></div>
<div class="plab" style="top:436.2px">Width [mm]</div>
<div class="fld tx" style="top:431.6px;left:1540px;width:367px"><span>0</span></div>
<div class="plab" style="top:461.9px">Offset top [mm]</div>
<div class="fld tx" style="top:457.3px;left:1540px;width:367px"><span>0</span></div>
<div class="plab" style="top:487.5px">Offset bottom [mm]</div>
<div class="fld tx" style="top:482.9px;left:1540px;width:367px"><span>0</span></div>
<div class="plab" style="top:513.1px">Repeat count</div>
<div class="fld tx" style="top:508.5px;left:1540px;width:367px"><span>1</span></div>
<div class="plab" style="top:538.8px">Gap [mm]</div>
<div class="fld tx" style="top:534.2px;left:1540px;width:367px"><span>0</span></div>
<div class="plab" style="top:564.4px">Chamfered corners</div>
<div class="pcb" style="top:561.4px"><svg class="chk" width="16" height="16" viewBox="0 0 16 16"><rect x="1" y="4" width="11" height="11" fill="#e3e3e3"/><path d="M3.2 9.2 L6 13 L13.2 1.8" fill="none" stroke="#f7811e" stroke-width="2.2"/></svg></div>
<div class="plab" style="top:590.0px">Chamfer cut size [mm]</div>
<div class="fld tx" style="top:585.4px;left:1540px;width:367px"><span>0</span></div>
<div class="sectri" style="top:621px"></div><div class="sech" style="top:615.5px">Welds</div>
<div class="plab" style="top:645.6px">All welds [mm]</div>
<div style="left:1540.4px;top:644px;font-size:12px;color:#6a6a6a;white-space:nowrap">5,0</div>
<div class="sbtn" style="top:641.8px;left:1566.2px;width:22.7px;height:22px"><svg width="23" height="22" viewBox="0 0 23 22"><rect width="23" height="22" fill="#9b9b9b"/><path d="M8.6 8 L11.3 4.6 L14 8 Z M8.6 13.6 L11.3 17 L14 13.6 Z" fill="#fff"/></svg></div>
<div class="fld dd" style="top:641.8px;left:1590.1px;width:189px;height:22px"><span style="left:6.6px;top:0">S 355</span></div>
<div class="ddarr" style="top:650.4px;left:1766.8px"></div>
<svg style="left:1782px;top:640px" width="126" height="26" viewBox="1782 640 126 26">
<rect x="1834" y="642.1" width="21" height="21" fill="#f37021"/>
<g fill="#fff" stroke="#808080" stroke-width=".9"><rect x="1790.9" y="644.3" width="4" height="12.4"/><rect x="1784.9" y="656.5" width="16.4" height="4.1"/></g>
<path d="M1790.4 650.4 V656.3 H1785 Z" fill="#000"/>
<g fill="#fff" stroke="#808080" stroke-width=".9"><rect x="1816.3" y="644.3" width="4" height="12.4"/><rect x="1810.3" y="656.5" width="16.4" height="4.1"/></g><path d="M1820.8 650.4 V656.3 H1826.6 Z" fill="#000"/>
<g fill="#fff" stroke="#6a4a3a" stroke-width=".9"><rect x="1842.3" y="644.3" width="4" height="12.4"/><rect x="1836.1" y="656.5" width="16.6" height="4.1"/></g>
<path d="M1841.8 648.8 V656.3 H1836.2 Z M1846.8 648.8 V656.3 H1852.6 Z" fill="#000"/>
<g fill="#fff" stroke="#808080" stroke-width=".9"><rect x="1867.8" y="644.3" width="4" height="12.4"/><rect x="1861.8" y="656.5" width="16.4" height="4.1"/></g><path d="M1871.4 652 V656.3 H1867.8 Z" fill="#000"/>
<g fill="#fff" stroke="#808080" stroke-width=".9"><rect x="1893.3" y="644.3" width="4" height="12.4"/><rect x="1887.3" y="656.5" width="16.4" height="4.1"/></g>
</svg>

<div style="left:0;top:63px;width:1px;height:1064px;background:#c4d6ea;opacity:.9"></div><div style="left:0;top:159.5px;width:1px;height:25px;background:#8496ae"></div><div style="left:1919px;top:63px;width:1px;height:97px;background:#c4d6ea"></div><div style="left:1919px;top:160px;width:1px;height:967px;background:#9eaaba"></div>
<div id="status" class="brushed">
<span class="sl" style="left:24.6px">Design code:</span><b class="sv" style="left:100.4px">EN</b>
<span class="sl" style="left:136.4px">Analysis:</span><b class="sv" style="left:190.5px">Stress, strain</b>
<span class="sl" style="left:283px">Load effects:</span><b class="sv" style="left:359.5px">In equilibrium</b>
<span class="sl" style="left:457.6px">Units:</span><b class="sv" style="left:498.5px">mm</b>
<span class="url"><i>www.</i>ideastatica<i>.com</i></span>
</div>
</div>
</body></html>
